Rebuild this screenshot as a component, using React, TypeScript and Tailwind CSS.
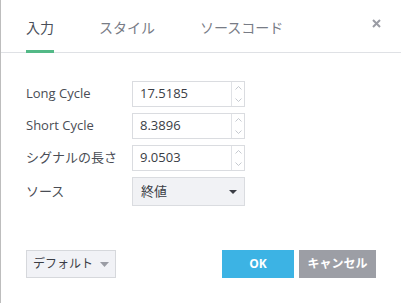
import React from "react";

const font = { fontFamily: '"Open Sans", "Noto Sans CJK JP", sans-serif' };

function Spinner() {
  return (
    <div className="flex w-[13px] flex-col border-l border-[#e0e2e6]">
      <div className="flex flex-1 items-center justify-center">
        <svg width="7" height="4" viewBox="0 0 7 4"><path d="M0.5 3.5 L3.5 0.5 L6.5 3.5" fill="none" stroke="#b8bcc4" strokeWidth="0.8" /></svg>
      </div>
      <div className="flex flex-1 items-center justify-center">
        <svg width="7" height="4" viewBox="0 0 7 4"><path d="M0.5 0.5 L3.5 3.5 L6.5 0.5" fill="none" stroke="#b8bcc4" strokeWidth="0.8" /></svg>
      </div>
    </div>
  );
}

function NumRow({ label, value }: { label: string; value: string }) {
  return (
    <div className="flex h-[26px] items-center">
      <div className="w-[106px] text-[13px] text-[#4a4d55]">{label}</div>
      <div className="flex h-[26px] w-[113px] border border-[#dadce0] bg-white">
        <div className="flex flex-1 items-center pl-[7px] text-[13px] text-[#3a3d45]">{value}</div>
        <Spinner />
      </div>
    </div>
  );
}

export default function App() {
  return (
    <div className="h-[303px] w-[401px] overflow-hidden border-l border-[#bdbdbd] bg-white" style={font}>
      <div className="relative flex h-[53px] border-b border-[#dfe1e5] pl-[25px]">
        <div className="relative flex h-full items-center pt-[2px] text-[14px] text-[#4a4f5a]">
          入力
          <div className="absolute bottom-[-1px] left-0 h-[3px] w-full bg-[#53b987]" />
        </div>
        <div className="ml-[45px] flex h-full items-center pt-[2px] text-[14px] text-[#787c86]">スタイル</div>
        <div className="ml-[45px] flex h-full items-center pt-[2px] text-[14px] text-[#787c86]">ソースコード</div>
        <div className="absolute right-[20px] top-[19px]">
          <svg width="9" height="9" viewBox="0 0 9 9"><path d="M1 1 L8 8 M8 1 L1 8" stroke="#9a9ca4" strokeWidth="2" /></svg>
        </div>
      </div>
      <div className="flex flex-col gap-[6px] pl-[25px] pt-[28px]">
        <NumRow label="Long Cycle" value="17.5185" />
        <NumRow label="Short Cycle" value="8.3896" />
        <NumRow label="シグナルの長さ" value="9.0503" />
        <div className="flex h-[29px] items-center">
          <div className="w-[106px] text-[13px] text-[#4a4d55]">ソース</div>
          <div className="flex h-[29px] w-[113px] items-center justify-between border border-[#dadce0] bg-[#f1f2f5] pl-[8px] pr-[7px] text-[13px] text-[#3a3d45]">
            <span>終値</span>
            <svg width="8" height="4" viewBox="0 0 8 4"><path d="M0 0 L8 0 L4 4 Z" fill="#3a3d45" /></svg>
          </div>
        </div>
      </div>
      <div className="mt-[44px] flex items-center pl-[25px] pr-[25px]">
        <div className="flex h-[28px] w-[90px] items-center justify-center gap-[7px] border border-[#d6d8dc] bg-[#f1f2f6] text-[12px] text-[#3a3d45]">
          <span>デフォルト</span>
          <svg width="9" height="5" viewBox="0 0 9 5"><path d="M0 0 L9 0 L4.5 5 Z" fill="#9a9ca4" /></svg>
        </div>
        <div className="flex-1" />
        <div className="flex h-[28px] w-[72px] items-center justify-center bg-[#3cb3e4] text-[12px] font-bold text-white">OK</div>
        <div className="ml-[5px] flex h-[28px] w-[77px] items-center justify-center bg-[#9c9ea5] text-[12px] font-bold text-white">キャンセル</div>
      </div>
    </div>
  );
}
